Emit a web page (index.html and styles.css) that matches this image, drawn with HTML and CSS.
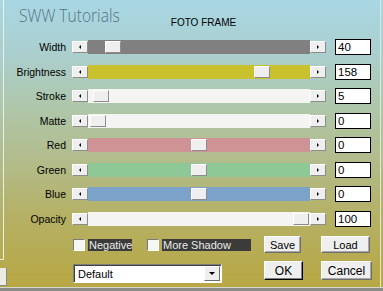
FILE: index.html
```html
<!DOCTYPE html>
<html>
<head>
<meta charset="utf-8">
<link rel="stylesheet" href="styles.css">
</head>
<body>
<div class="window">
  <div class="content">
    <div class="side">
      <div class="side-panel"></div>
      <div class="side-btn"></div>
    </div>
    <div class="main">
      <header class="header">
        <h1 class="title">SWW Tutorials</h1>
        <div class="caption">FOTO FRAME</div>
      </header>
      <div class="rows">
        <div class="label">Width</div>
        <div class="slider"><span class="arrow left"></span><div class="track gray"><span class="thumb" style="left:17px"></span></div><span class="arrow right"></span></div>
        <div class="value">40</div>

        <div class="label">Brightness</div>
        <div class="slider"><span class="arrow left"></span><div class="track yellow"><span class="thumb" style="left:166px"></span></div><span class="arrow right"></span></div>
        <div class="value">158</div>

        <div class="label">Stroke</div>
        <div class="slider"><span class="arrow left"></span><div class="track white"><span class="thumb" style="left:5px"></span></div><span class="arrow right"></span></div>
        <div class="value">5</div>

        <div class="label">Matte</div>
        <div class="slider"><span class="arrow left"></span><div class="track white"><span class="thumb" style="left:2px"></span></div><span class="arrow right"></span></div>
        <div class="value">0</div>

        <div class="label">Red</div>
        <div class="slider"><span class="arrow left"></span><div class="track red"><span class="thumb" style="left:103px"></span></div><span class="arrow right"></span></div>
        <div class="value">0</div>

        <div class="label">Green</div>
        <div class="slider"><span class="arrow left"></span><div class="track green"><span class="thumb" style="left:103px"></span></div><span class="arrow right"></span></div>
        <div class="value">0</div>

        <div class="label">Blue</div>
        <div class="slider"><span class="arrow left"></span><div class="track blue"><span class="thumb" style="left:103px"></span></div><span class="arrow right"></span></div>
        <div class="value">0</div>

        <div class="label">Opacity</div>
        <div class="slider"><span class="arrow left"></span><div class="track white"><span class="thumb" style="left:205px"></span></div><span class="arrow right"></span></div>
        <div class="value">100</div>
      </div>

      <div class="opts">
        <div class="checks">
          <span class="check"></span><span class="check-label neg">Negative</span>
          <span class="check second"></span><span class="check-label more">More Shadow</span>
        </div>
        <button class="btn save">Save</button>
        <button class="btn load">Load</button>
      </div>

      <div class="actions">
        <div class="select"><span class="select-text">Default</span><span class="select-btn"><span class="down"></span></span></div>
        <button class="btn ok">OK</button>
        <button class="btn cancel">Cancel</button>
      </div>
    </div>
    <div class="edge"></div>
  </div>
  <div class="bottom"></div>
</div>
</body>
</html>
```

FILE: styles.css
```css
* { box-sizing: border-box; margin: 0; padding: 0; }
html, body { width: 383px; height: 291px; overflow: hidden; }
body {
  font-family: "Liberation Sans", Arial, sans-serif;
  font-size: 11px;
  color: #000;
}
.window {
  width: 383px;
  height: 291px;
  display: flex;
  flex-direction: column;
  background: linear-gradient(180deg, #a8d7e3 0%, #abcfcf 18%, #afc6a8 38%, #b2bc8c 55%, #b5b064 75%, #b8a742 100%);
}
.content { flex: 1; display: flex; min-height: 0; }
.side { width: 7px; flex: none; display: flex; flex-direction: column; }
.side-panel {
  width: 4px;
  height: 260px;
  border-right: 1px solid #e8f0ec;
  border-bottom: 1px solid #e8ecd8;
}
.side-btn {
  width: 7px;
  height: 18px;
  margin-top: 8px;
  background: #ecece6;
  border-right: 1px solid #8a8a80;
  border-bottom: 1px solid #8a8a80;
}
.main { flex: 1; min-width: 0; }
.edge { width: 3px; flex: none; border-left: 1px solid #dfe6dc; }
.bottom { height: 4px; flex: none; border-top: 1px solid #d6d6cc; background: #8c8c86; }

.header { height: 39px; display: flex; align-items: flex-start; }
.title {
  font-family: "Open Sans", "Liberation Sans", sans-serif;
  font-weight: 300;
  font-size: 19px;
  line-height: 19px;
  color: #557188;
  margin: 6px 0 0 12px;
  transform: scaleX(0.82);
  transform-origin: left center;
  white-space: nowrap;
}
.caption {
  font-size: 10px;
  line-height: 12px;
  margin: 17px 0 0 29px;
  white-space: nowrap;
}

.rows {
  display: grid;
  grid-template-columns: 65px 263px 36px;
  grid-auto-rows: 24.5px;
  align-items: start;
}
.label {
  font-size: 10.5px;
  line-height: 16px;
  text-align: right;
  padding-right: 6px;
  white-space: nowrap;
}
.slider {
  width: 254px;
  height: 14px;
  margin-top: 1px;
  display: flex;
  align-items: center;
}
.arrow, .thumb {
  width: 16px;
  height: 12px;
  background: #efefef;
  border: 1px solid;
  border-color: #ffffff #8c8c8c #8c8c8c #ffffff;
  display: flex;
  align-items: center;
  justify-content: center;
  flex: none;
}
.arrow::before {
  content: "";
  width: 0;
  height: 0;
  border-top: 2px solid transparent;
  border-bottom: 2px solid transparent;
}
.arrow.left::before { border-right: 2px solid #000; margin-left: -1px; }
.arrow.right::before { border-left: 2px solid #000; margin-left: 0; }
.track { flex: 1; height: 14px; position: relative; }
.thumb { position: absolute; top: 1px; }
.gray { background: #808080; }
.yellow { background: #c9c22e; }
.white { background: #f4f4f3; }
.red { background: #cf9396; }
.green { background: #8fc897; }
.blue { background: #7ba3c9; }
.value {
  width: 36px;
  height: 16px;
  background: #fff;
  border: 1px solid #000;
  font-size: 11.5px;
  line-height: 14px;
  padding-left: 2px;
}

.opts {
  display: flex;
  align-items: center;
  height: 17px;
  margin-top: 1px;
  padding-left: 66px;
}
.checks { width: 191px; display: flex; align-items: center; }
.check {
  width: 12px;
  height: 12px;
  background: #f6f6f6;
  border: 1px solid;
  border-color: #7c7c7c #ffffff #ffffff #7c7c7c;
  flex: none;
}
.check.second { margin-left: 15px; }
.check-label {
  margin-left: 3px;
  height: 12px;
  line-height: 12px;
  background: #3b3b39;
  color: #ececec;
  font-size: 11px;
  white-space: nowrap;
  padding-left: 1px;
}
.check-label.neg { width: 44px; }
.check-label.more { width: 89px; }

.btn {
  font-family: "Liberation Sans", Arial, sans-serif;
  font-size: 11px;
  color: #000;
  background: #efefef;
  border: 1px solid;
  border-color: #ffffff #6e6e6e #6e6e6e #ffffff;
  box-shadow: inset -1px -1px 0 #a8a8a8;
  height: 17px;
  line-height: 14px;
}
.save { width: 37px; }
.load { width: 49px; margin-left: 20px; }

.actions {
  display: flex;
  align-items: flex-start;
  margin-top: 8px;
  padding-left: 66px;
}
.select {
  width: 149px;
  height: 19px;
  margin-top: 3px;
  background: #fff;
  border: 1px solid;
  border-color: #7c7c7c #ffffff #ffffff #7c7c7c;
  box-shadow: inset 1px 1px 0 #404040;
  display: flex;
  align-items: center;
  padding: 1px 1px 1px 4px;
}
.select-text { flex: 1; font-size: 11px; }
.select-btn {
  width: 16px;
  height: 15px;
  background: #efefef;
  border: 1px solid;
  border-color: #ffffff #6e6e6e #6e6e6e #ffffff;
  display: flex;
  align-items: center;
  justify-content: center;
}
.down {
  width: 0;
  height: 0;
  border-left: 3px solid transparent;
  border-right: 3px solid transparent;
  border-top: 3px solid #000;
}
.ok {
  width: 39px;
  height: 19px;
  margin-left: 42px;
  border-color: #ffffff #000 #000 #ffffff;
  box-shadow: inset -1px -1px 0 #808080;
  font-size: 12px;
}
.cancel { width: 51px; height: 19px; margin-left: 18px; font-size: 12px; }
```
